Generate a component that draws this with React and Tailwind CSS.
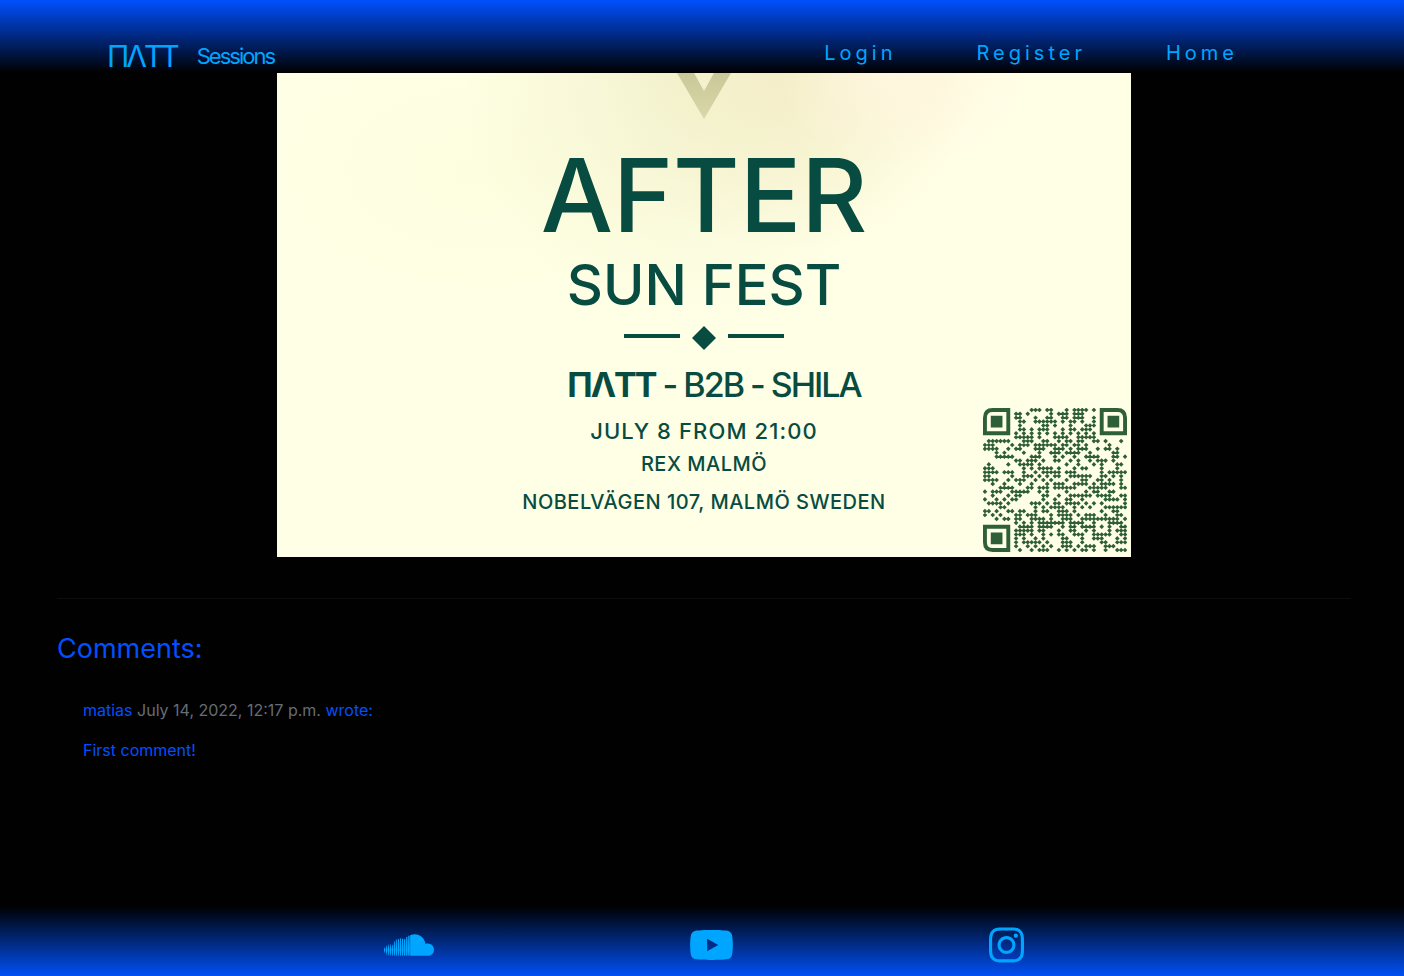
import React from "react";
import { FaSoundcloud, FaYoutube, FaInstagram } from "react-icons/fa";

const SIZE = 37;

function inFinder(x, y) {
  return (x < 8 && y < 8) || (x > SIZE - 9 && y < 8) || (x < 8 && y > SIZE - 9);
}

function qrPath() {
  let seed = 20220708;
  let d = "";
  for (let y = 0; y < SIZE; y++) {
    for (let x = 0; x < SIZE; x++) {
      seed = (Math.imul(seed, 1664525) + 1013904223) >>> 0;
      let on = seed / 4294967296 < 0.51;
      if (inFinder(x, y)) continue;
      if (x === 6 || y === 6) on = (x + y) % 2 === 0;
      const ring = Math.max(Math.abs(x - 30), Math.abs(y - 30));
      if (ring <= 2) on = ring !== 1;
      if (on) d += `M${x * 10 + 5} ${y * 10 - 1}l6 6l-6 6l-6 -6z`;
    }
  }
  return d;
}

const QR_DOTS = qrPath();

function QrCode() {
  return (
    <svg viewBox="0 0 370 370" className="size-36" role="img" aria-label="QR code">
      <g fill="none" stroke="#2f5f38" strokeWidth="10">
        <path d="M5 65V25Q5 5 25 5H65V65Z" />
        <path d="M305 5H345Q365 5 365 25V65H305Z" />
        <path d="M5 305H65V365H25Q5 365 5 345Z" />
      </g>
      <g fill="#2f5f38">
        <path d="M20 20h30v30h-30zM320 20h30v30h-30zM20 320h30v30h-30z" />
        <path d={QR_DOTS} />
      </g>
    </svg>
  );
}

function Header() {
  return (
    <header className="flex h-[73px] items-end justify-between bg-linear-to-b/srgb from-[#0050ff] to-black pr-[166px] pl-[107px] text-[#00a5ff]">
      <a href="#top" className="flex items-center gap-5 pb-px">
        <span className="text-[30px] leading-8 tracking-[-3px]">ΠΛTT</span>
        <span className="text-[22px] leading-8 tracking-[-2px]">Sessions</span>
      </a>
      <nav className="flex gap-20 pb-1.5 text-xl leading-7 tracking-[4px]">
        <a href="#login">Login</a>
        <a href="#register">Register</a>
        <a href="#home">Home</a>
      </nav>
    </header>
  );
}

function Poster() {
  return (
    <section className="relative mx-auto flex w-[61%] flex-col items-center bg-[#ffffe6] bg-[radial-gradient(ellipse_at_73%_0%,#fff5de_0%,#fff5de00_14%),radial-gradient(ellipse_at_60%_0%,#f4eec8_0%,#f4eec800_26%),radial-gradient(ellipse_at_48%_0%,#f3f3cf_0%,#f3f3cf00_36%),radial-gradient(ellipse_at_24%_20%,#fdfedf_0%,#fdfedf00_30%)] pb-[43px] text-center font-medium text-[#084c41]">
      <svg viewBox="0 0 54 46" className="mb-6 h-[46px] w-[54px]" aria-hidden="true">
        <defs>
          <linearGradient id="chevron" x1="0" y1="0" x2="0" y2="1">
            <stop offset="0" stopColor="#c9c897" />
            <stop offset="1" stopColor="#dad7aa" />
          </linearGradient>
        </defs>
        <path d="M0 0H17L27 18L37 0H54L27 46Z" fill="url(#chevron)" />
      </svg>
      <h1 className="text-[102px] leading-[104px]">AFTER</h1>
      <h2 className="mt-2.5 text-[56px] leading-14">SUN FEST</h2>
      <div className="mt-[13px] flex h-6 items-center gap-3">
        <span className="mb-1 h-1 w-14 bg-[#084c41]" />
        <svg viewBox="0 0 24 24" className="size-6" aria-hidden="true">
          <path d="M12 0L24 12L12 24L0 12Z" fill="#084c41" />
        </svg>
        <span className="mb-1 h-1 w-14 bg-[#084c41]" />
      </div>
      <p className="mt-[15px] pl-5 text-[34px] leading-10 tracking-[-2px]">
        <span className="font-bold">ΠΛTT</span> - B2B - SHILA
      </p>
      <p className="mt-3.5 text-[22px] leading-6 tracking-wider">JULY 8 FROM 21:00</p>
      <p className="mt-[9px] text-xl leading-6 tracking-wide">REX MALMÖ</p>
      <p className="mt-3.5 text-xl leading-6 tracking-wide">NOBELVÄGEN 107, MALMÖ SWEDEN</p>
      <div className="absolute right-1 bottom-[5px]">
        <QrCode />
      </div>
    </section>
  );
}

function Comments() {
  return (
    <section className="mx-[53px] mt-[41px] border-t border-[#0c0c0c] pt-8 text-[#0050ff]">
      <h3 className="text-[27px] leading-9">Comments:</h3>
      <article className="mt-[31px] px-[26px] text-base leading-6">
        <p>
          matias <time className="text-[#666d74]">July 14, 2022, 12:17 p.m.</time> wrote:
        </p>
        <p className="mt-4">First comment!</p>
      </article>
    </section>
  );
}

function Footer() {
  return (
    <footer className="mt-auto bg-linear-to-b/srgb from-black to-[#0050f5] pt-[19px] pb-[11px] pl-1 text-[#00a5ff]">
      <div className="mx-auto flex w-[64%] justify-around">
        <a href="#soundcloud" aria-label="SoundCloud">
          <FaSoundcloud className="h-10 w-[50px]" />
        </a>
        <a href="#youtube" aria-label="YouTube">
          <FaYoutube className="h-10 w-[45px]" />
        </a>
        <a href="#instagram" aria-label="Instagram">
          <FaInstagram className="h-10 w-[35px]" />
        </a>
      </div>
    </footer>
  );
}

export default function App() {
  return (
    <div className="flex min-h-screen flex-col bg-[#010101] font-['Inter',sans-serif]">
      <Header />
      <main className="pl-1">
        <Poster />
        <Comments />
      </main>
      <Footer />
    </div>
  );
}
